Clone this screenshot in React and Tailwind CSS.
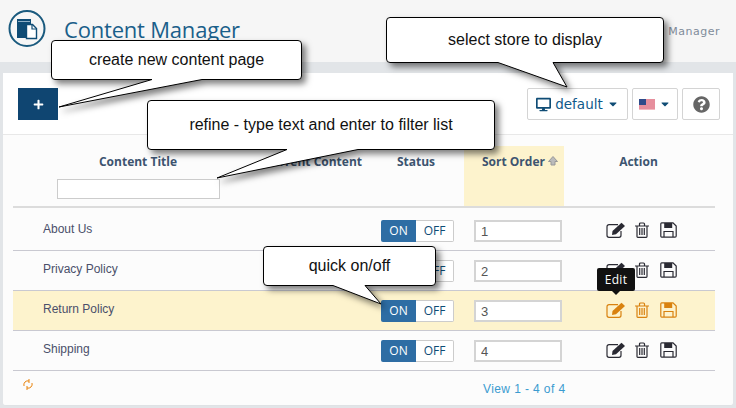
import React from 'react';
import { FaDesktop, FaQuestionCircle, FaPlus, FaCaretDown } from 'react-icons/fa';

const rows = [
    { title: 'About Us', order: '1' },
    { title: 'Privacy Policy', order: '2' },
    { title: 'Return Policy', order: '3', hover: true },
    { title: 'Shipping', order: '4' },
];

const PageIcon = () => (
    <svg width="40" height="38" viewBox="0 0 40 38" fill="none">
        <circle cx="19" cy="18.500" r="17.500" stroke="#1a5a7e" strokeWidth="2" />
        <path d="M9 9h14v5h-5v14H9z" fill="#0f4c75" />
        <path d="M10 11.500h12" stroke="#8fb0c6" strokeWidth="1" />
        <path d="M18.500 14.500h6l4 4v10h-10z" fill="#fff" stroke="#0f4c75" strokeWidth="1.400" />
        <path d="M24 15v4h4" fill="none" stroke="#0f4c75" strokeWidth="1.200" />
    </svg>
);

const Flag = () => (
    <svg width="16" height="11" viewBox="0 0 16 11">
        <rect width="16" height="11" fill="#f3b9c0" />
        <path d="M0 1h16M0 3h16M0 5h16M0 7h16M0 9h16" stroke="#d9657a" strokeWidth="1" />
        <rect width="7" height="6" fill="#2f4b8a" />
    </svg>
);

const EditIcon = () => (
    <svg width="20" height="16" viewBox="0 0 20 16" fill="none" stroke="currentColor" strokeWidth="1.200">
        <path d="M12 2.700H3a2 2 0 0 0-2 2v8.600a2 2 0 0 0 2 2h10a2 2 0 0 0 2-2V9" />
        <path d="M6.500 9L15.500 .8L19 4L10 12.200L6 13z" fill="currentColor" stroke="none" />
    </svg>
);

const TrashIcon = () => (
    <svg width="14" height="16" viewBox="0 0 14 16" fill="none" stroke="currentColor" strokeWidth="1.200">
        <path d="M0 4h14M4.500 4V2a1 1 0 0 1 1-1h3a1 1 0 0 1 1 1v2" />
        <path d="M2 4v10.500a.8.8 0 0 0 .8.8h8.400a.8.8 0 0 0 .8-.8V4" />
        <path d="M4.700 6v7M7 6v7M9.300 6v7" />
    </svg>
);

const SaveIcon = () => (
    <svg width="17" height="16" viewBox="0 0 17 16" fill="none" stroke="currentColor" strokeWidth="1.200">
        <path d="M1.700 .8H13l3.200 3.200v10a1.200 1.200 0 0 1-1.200 1.200H1.700A1 1 0 0 1 .8 14.300V1.700a1 1 0 0 1 .9-.9z" />
        <path d="M4.200 1h8v5h-8z" fill="currentColor" stroke="none" />
        <path d="M4 15V9.500h9V15" />
    </svg>
);

const SortArrow = () => (
    <svg width="10" height="10" viewBox="0 0 10 10" className="mt-[3px] ml-[3px]">
        <path d="M5 .5L9.500 5.500H7V9H3V5.500H.5z" fill="#bbb" stroke="#999" strokeWidth="1" />
    </svg>
);

const Toggle = () => (
    <div className="flex h-[22px] w-[73px] text-[12px] font-['Open_Sans',sans-serif]">
        <span className="flex w-[35px] items-center justify-center rounded-l-[2px] bg-[#2e6da4] text-white">ON</span>
        <span className="flex flex-1 items-center justify-center rounded-r-[2px] border border-l-0 border-[#ccc] bg-white text-[#0f4c75]">OFF</span>
    </div>
);

const Row = ({ title, order, hover }) => (
    <div className={`grid h-10 grid-cols-[245px_110px_96px_100px_151px] items-center border-b border-[#c9c9d1] ${hover ? 'bg-[#fdf3cd]' : ''}`}>
        <span className="pb-[3px] pl-[30px] text-[12px] text-[#4a4f6a]">{title}</span>
        <span></span>
        <div className="pl-[13px]"><Toggle /></div>
        <div className="pl-[10px]">
            <input readOnly value={order} className="h-[22px] w-[88px] border-2 border-[#d4d4d4] bg-white pl-[5px] text-[13px] text-[#555] outline-none" />
        </div>
        <div className={`flex items-center pb-[2px] pl-[42px] ${hover ? 'text-[#d9820f]' : 'text-[#2a2a33]'}`}>
            <EditIcon />
            <span className="mr-[11px] ml-[9px]"><TrashIcon /></span>
            <SaveIcon />
        </div>
    </div>
);

const Callout = ({ className, path, width, height, children }) => (
    <div className={`absolute flex items-center justify-center text-[16px] text-[#111] ${className}`}>
        <svg width={width} height={height} className="absolute top-0 left-0 overflow-visible drop-shadow-[4px_4px_3px_rgba(0,0,0,0.5)]">
            <path d={path} fill="#fff" stroke="#000" strokeWidth="1" />
        </svg>
        <span className="relative">{children}</span>
    </div>
);

export default function App() {
    return (
        <div className="relative h-[408px] w-[736px] overflow-hidden bg-[#e2e5e8] font-['Liberation_Sans',Arial,sans-serif]">
            {/* title bar */}
            <div className="flex h-[62px] items-start bg-[#f6f6f6] pr-4 pl-2">
                <div className="mt-[10px]"><PageIcon /></div>
                <h1 className="mt-[11px] ml-[16px] font-['Open_Sans',sans-serif] text-[22px] leading-9 tracking-[-0.2px] text-[#1a5f8a]">Content Manager</h1>
                <span className="mt-[24px] ml-auto font-['DejaVu_Sans',sans-serif] text-[11px] leading-4 tracking-[0.5px] text-[#7f8c9a]">Content Manager</span>
            </div>

            {/* card */}
            <div className="mx-[3px] mt-[11px] h-[333px] rounded-[3px] border-b border-[#dfe2e5] bg-[#fcfcfc]">
                <div className="flex h-[62px] items-start border-b border-[#e8e8e8] bg-white pt-[15px] pr-[13px] pl-[15px]">
                    <button className="flex h-8 w-10 items-center justify-center bg-[#0f4571] text-white"><FaPlus size={11} /></button>
                    <div className="ml-auto flex gap-[4px]">
                        <button className="flex h-8 w-[101px] items-center justify-center gap-[4px] rounded-[2px] border border-[#d4d4d4] bg-white font-['DejaVu_Sans',sans-serif] text-[13.500px] text-[#0f5a8a]">
                            <FaDesktop size={15} className="text-[#0f4c75]" />
                            default
                            <FaCaretDown size={12} className="text-[#0f4c75]" />
                        </button>
                        <button className="flex h-8 w-[46px] items-center justify-center gap-[4px] rounded-[2px] border border-[#d4d4d4] bg-white">
                            <Flag />
                            <FaCaretDown size={12} className="text-[#0f4c75]" />
                        </button>
                        <button className="flex h-8 w-[38px] items-center justify-center rounded-[2px] border border-[#d4d4d4] bg-white text-[#666]">
                            <FaQuestionCircle size={17} />
                        </button>
                    </div>
                </div>

                <div className="mr-[18px] ml-[10px]">
                    {/* table head */}
                    <div className="mt-[11px] mb-[3px] grid h-[62px] grid-cols-[245px_110px_96px_100px_151px] border-b-2 border-[#dcdcdc] font-['Open_Sans',sans-serif] text-[12px] font-bold text-[#3d5470]">
                        <div className="flex flex-col items-center pt-[7px] pl-[5px]">
                            <span>Content Title</span>
                            <input readOnly className="mt-[8px] h-5 w-[163px] border border-[#ccc] bg-white outline-none" />
                        </div>
                        <span className="pt-[7px] pr-[6px] text-right">Current Content</span>
                        <span className="pt-[7px] text-center">Status</span>
                        <span className="flex items-start bg-[#fdf3cd] pt-[7px] pl-[18px]">Sort Order<SortArrow /></span>
                        <span className="pt-[7px] pr-[2px] text-center">Action</span>
                    </div>
                    {rows.map(r => <Row key={r.order} {...r} />)}
                </div>

                {/* footer */}
                <div className="relative flex h-[35px] items-center pl-[480px] text-[12px] tracking-[0.4px] text-[#3b9bd0]">
                    <svg width="10" height="11" viewBox="0 0 10 11" fill="none" stroke="#e8830c" strokeWidth="1" className="absolute top-[8px] left-[20px]">
                        <path d="M1 7a4 4 0 0 1 5-5M9 4a4 4 0 0 1-5 5M6 0v4M4 7v4" />
                    </svg>
                    <span>View 1 - 4 of 4</span>
                </div>
            </div>

            {/* callouts */}
            <Callout className="top-[40px] left-[51px] h-10 w-[251px]" width={251} height={40}
                path="M4 .5H247a3.500 3.500 0 0 1 3.500 3.500V36a3.500 3.500 0 0 1-3.500 3.500H151L8 67L101 39.500H4A3.500 3.500 0 0 1 .5 36V4A3.500 3.500 0 0 1 4 .5z">
                create new content page
            </Callout>
            <Callout className="top-[17px] left-[386px] h-[46px] w-[278px]" width={278} height={46}
                path="M4 .5H274a3.500 3.500 0 0 1 3.500 3.500V42a3.500 3.500 0 0 1-3.500 3.500H167L181 70L112 45.500H4A3.500 3.500 0 0 1 .5 42V4A3.500 3.500 0 0 1 4 .5z">
                select store to display
            </Callout>
            <Callout className="top-[100px] left-[147px] h-[50px] w-[348px]" width={348} height={50}
                path="M4 .5H344a3.500 3.500 0 0 1 3.500 3.500V46a3.500 3.500 0 0 1-3.500 3.500H211L70 78L140 49.500H4A3.500 3.500 0 0 1 .5 46V4A3.500 3.500 0 0 1 4 .5z">
                refine - type text and enter to filter list
            </Callout>
            <Callout className="top-[246px] left-[263px] h-10 w-[173px]" width={173} height={40}
                path="M4 .5H169a3.500 3.500 0 0 1 3.500 3.500V36a3.500 3.500 0 0 1-3.500 3.500H102L118 58L70 39.500H4A3.500 3.500 0 0 1 .5 36V4A3.500 3.500 0 0 1 4 .5z">
                quick on/off
            </Callout>

            {/* tooltip */}
            <div className="absolute top-[268px] left-[597px] flex h-[23px] w-[38px] items-center justify-center rounded-[2px] bg-[#111] font-['Open_Sans',sans-serif] text-[12px] tracking-[0.3px] text-white">
                Edit
                <span className="absolute top-[23px] left-[15px] border-x-[4px] border-t-[4px] border-x-transparent border-t-[#111]"></span>
            </div>
        </div>
    );
}
